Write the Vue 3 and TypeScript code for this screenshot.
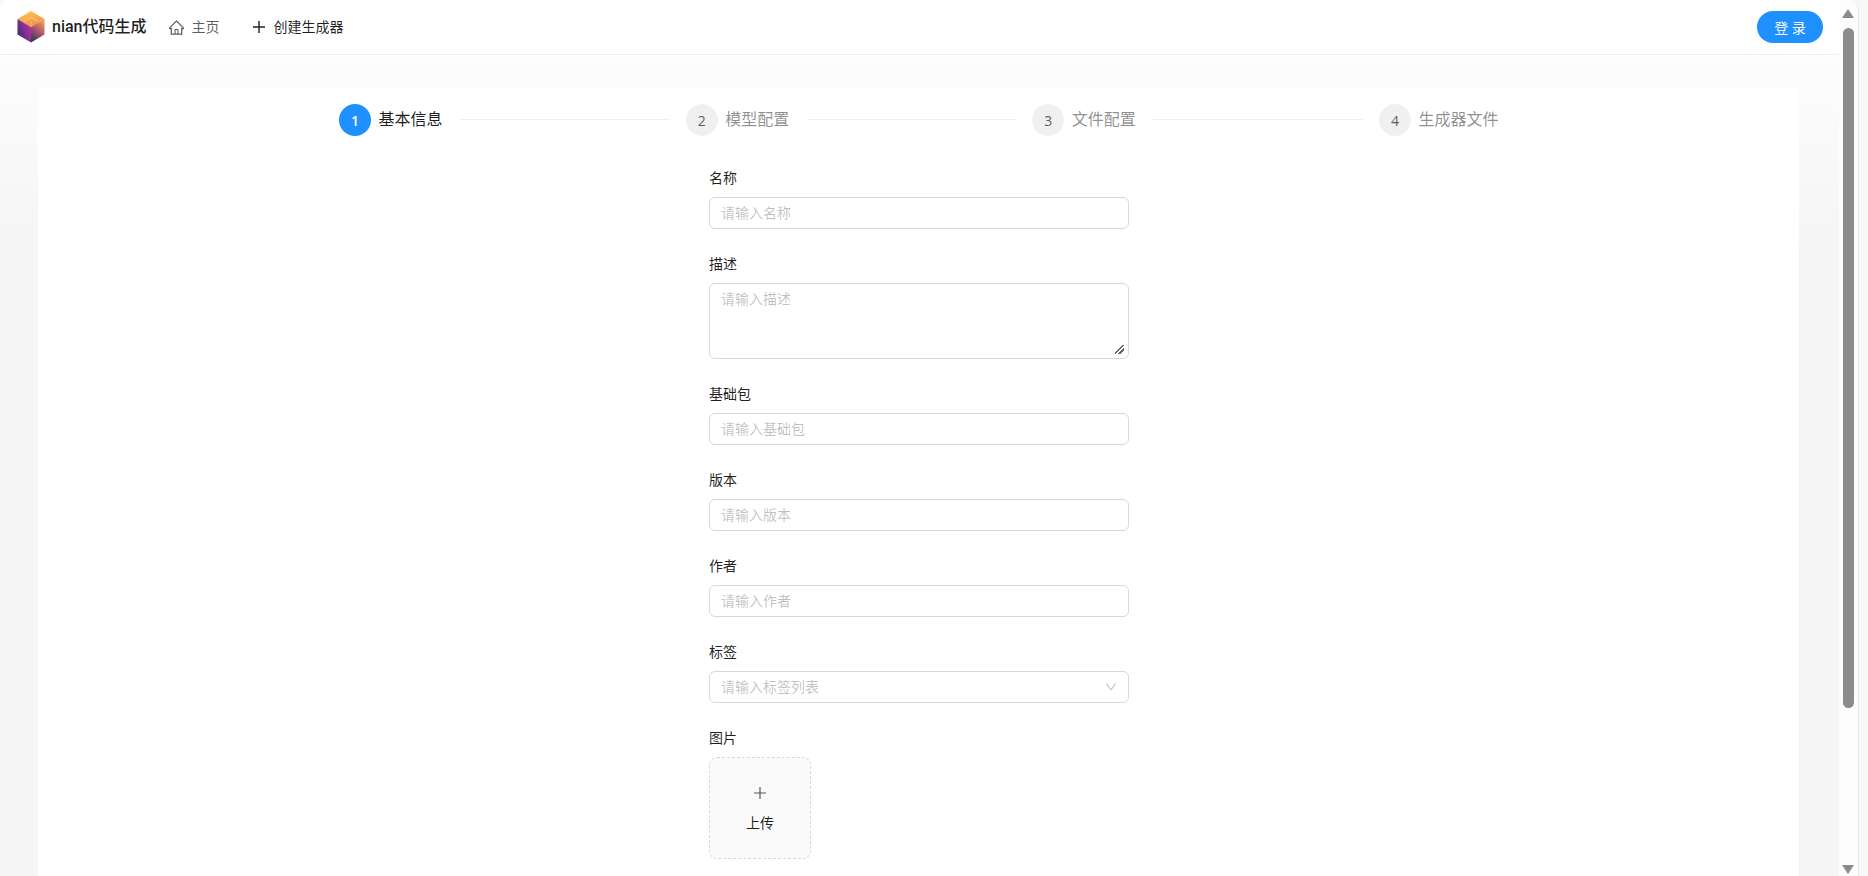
<script setup lang="ts">
const steps = [
  { n: 1, title: '基本信息', active: true },
  { n: 2, title: '模型配置', active: false },
  { n: 3, title: '文件配置', active: false },
  { n: 4, title: '生成器文件', active: false },
]
const fields = [
  { label: '基础包', ph: '请输入基础包' },
  { label: '版本', ph: '请输入版本' },
  { label: '作者', ph: '请输入作者' },
]
</script>

<template>
  <div class="shell">
    <div class="window">
      <div class="page">
        <header class="header">
          <div class="brand">
            <svg class="logo" viewBox="0 0 28 32" width="28" height="32">
              <defs>
                <linearGradient id="gTop" x1="0.3" y1="0" x2="0.7" y2="1">
                  <stop offset="0" stop-color="#ffc552" />
                  <stop offset="1" stop-color="#f08a4b" />
                </linearGradient>
                <linearGradient id="gLeft" x1="1" y1="0.1" x2="0" y2="0.8">
                  <stop offset="0" stop-color="#c8358e" />
                  <stop offset="0.55" stop-color="#7a3092" />
                  <stop offset="1" stop-color="#2f2c72" />
                </linearGradient>
                <linearGradient id="gRight" x1="0.7" y1="0" x2="0.2" y2="1">
                  <stop offset="0" stop-color="#f49a50" />
                  <stop offset="0.5" stop-color="#a9546f" />
                  <stop offset="1" stop-color="#2f3a5f" />
                </linearGradient>
              </defs>
              <polygon points="14,0 27.5,8 14,16 0.5,8" fill="url(#gTop)" />
              <polygon points="0.5,8 14,16 14,31.5 0.5,23.5" fill="url(#gLeft)" />
              <polygon points="27.5,8 14,16 14,31.5 27.5,23.5" fill="url(#gRight)" />
              <path d="M7 10.5 14 6.5 21 10.5 M14 15.5 V11" fill="none" stroke="#ffe0a8" stroke-width="0.7" opacity="0.8" />
            </svg>
            <span class="brand-name">nian代码生成</span>
          </div>
          <nav class="nav">
            <a class="nav-item muted">
              <svg viewBox="64 64 896 896" width="15" height="15" fill="currentColor">
                <path d="M946.5 505L560.1 118.8l-25.9-25.9a31.5 31.5 0 0 0-44.4 0L77.5 505a63.9 63.9 0 0 0-18.8 46c.4 35.2 29.7 63.3 64.9 63.3h42.5V940h691.8V614.3h43.4c17.1 0 33.2-6.7 45.3-18.8a63.6 63.6 0 0 0 18.7-45.3c0-17-6.7-33.1-18.8-45.2zM568 868H456V664h112v204zm217.9-325.7V868H632V640c0-22.1-17.9-40-40-40H432c-22.1 0-40 17.9-40 40v228H238.1V542.3h-96l370-369.7 23.1 23.1L882 542.3h-96.1z" />
              </svg>
              <span>主页</span>
            </a>
            <a class="nav-item strong">
              <svg viewBox="0 0 14 14" width="14" height="14" fill="none" stroke="currentColor" stroke-width="1.4">
                <path d="M7 1V13M1 7H13" />
              </svg>
              <span>创建生成器</span>
            </a>
          </nav>
          <button class="login" type="button">登 录</button>
        </header>

        <main class="card">
          <div class="steps">
            <div v-for="s in steps" :key="s.n" class="step" :class="{ active: s.active }">
              <span class="step-num">{{ s.n }}</span>
              <span class="step-title">{{ s.title }}</span>
              <span v-if="s.n < 4" class="step-line"></span>
            </div>
          </div>

          <form class="form">
            <div class="field">
              <label>名称</label>
              <input class="control" placeholder="请输入名称" />
            </div>
            <div class="field">
              <label>描述</label>
              <textarea class="control area" placeholder="请输入描述"></textarea>
            </div>
            <div v-for="f in fields" :key="f.label" class="field">
              <label>{{ f.label }}</label>
              <input class="control" :placeholder="f.ph" />
            </div>
            <div class="field">
              <label>标签</label>
              <div class="control select">
                <span class="select-ph">请输入标签列表</span>
                <svg viewBox="64 64 896 896" width="12" height="12" fill="#bfbfbf">
                  <path d="M884 256h-75c-5.1 0-9.9 2.5-12.9 6.6L512 654.2 227.9 262.6c-3-4.1-7.8-6.6-12.9-6.6h-75c-6.5 0-10.3 7.4-6.5 12.7l352.6 486.1c12.8 17.6 39 17.6 51.7 0l352.6-486.1c3.9-5.3.1-12.7-6.4-12.7z" />
                </svg>
              </div>
            </div>
            <div class="field">
              <label>图片</label>
              <div class="upload">
                <svg viewBox="0 0 14 14" width="14" height="14" fill="none" stroke="#595959" stroke-width="1.2">
                  <path d="M7 1V13M1 7H13" />
                </svg>
                <span>上传</span>
              </div>
            </div>
          </form>
        </main>
      </div>

      <div class="scrollbar">
        <span class="arrow up"></span>
        <span class="thumb"></span>
        <span class="arrow down"></span>
      </div>
    </div>
  </div>
</template>

<style>
html,
body {
  margin: 0;
  overflow: hidden;
}
</style>

<style scoped>
.shell {
  width: 1868px;
  height: 876px;
  display: flex;
  background: #f8f8f8;
  font-family: 'Open Sans', 'Noto Sans CJK SC', sans-serif;
  font-size: 14px;
  color: rgba(0, 0, 0, 0.88);
}
.window {
  width: 1858px;
  height: 876px;
  display: flex;
  overflow: hidden;
  border-right: 1px solid #e6e6e6;
  border-radius: 10px 10px 0 0;
  box-sizing: content-box;
  margin-right: -1px;
}
.page {
  width: 1839px;
  height: 876px;
  overflow: hidden;
  background: linear-gradient(#ffffff, #f5f5f5 28%);
}
.header {
  height: 54px;
  border-bottom: 1px solid #ededed;
  background: #fff;
  display: flex;
  align-items: center;
  padding: 0 16px 0 17px;
}
.brand {
  display: flex;
  align-items: center;
  gap: 7px;
}
.logo {
  display: block;
}
.brand-name {
  font-family: Roboto, 'Noto Sans CJK SC', sans-serif;
  font-size: 16px;
  font-weight: 500;
  line-height: 24px;
  color: rgba(0, 0, 0, 0.88);
}
.nav {
  display: flex;
  align-items: center;
  gap: 32px;
  margin-left: 22px;
  flex: 1;
}
.nav-item {
  display: flex;
  align-items: center;
  gap: 8px;
  line-height: 22px;
}
.muted {
  color: rgba(0, 0, 0, 0.65);
}
.strong {
  color: rgba(0, 0, 0, 0.88);
}
.login {
  width: 66px;
  height: 32px;
  border: 0;
  border-radius: 16px;
  background: #1e90ff;
  color: #fff;
  font: inherit;
  padding: 0;
}
.card {
  margin: 32px 40px 0 38px;
  padding: 17px 0 0 1px;
  height: 900px;
  background: #fff;
  border-radius: 6px;
}
.steps {
  width: 1160px;
  margin: 0 auto;
  display: flex;
  gap: 16px;
}
.step {
  flex: 1;
  display: flex;
  align-items: center;
  height: 32px;
  min-width: 0;
}
.step:last-child {
  flex: none;
  padding-right: 0.5px;
}
.step-num {
  width: 32px;
  height: 32px;
  border-radius: 50%;
  background: rgba(0, 0, 0, 0.06);
  color: rgba(0, 0, 0, 0.65);
  display: flex;
  align-items: center;
  justify-content: center;
  margin-right: 7.5px;
  flex: none;
}
.step-title {
  font-size: 16px;
  line-height: 32px;
  margin-bottom: 2px;
  color: rgba(0, 0, 0, 0.45);
  white-space: nowrap;
}
.step-line {
  flex: 1;
  height: 1px;
  background: rgba(5, 5, 5, 0.06);
  margin: 0 0 2px 17.5px;
}
.step.active .step-num {
  background: #1e90ff;
  color: #fff;
  font-weight: 600;
}
.step.active .step-title {
  color: rgba(0, 0, 0, 0.88);
}
.form {
  width: 420px;
  margin: 31px auto 0;
}
.field {
  margin-bottom: 24px;
}
.field label {
  display: block;
  height: 22px;
  line-height: 22px;
  margin-bottom: 8px;
}
.control {
  display: block;
  width: 100%;
  height: 32px;
  box-sizing: border-box;
  border: 1px solid #d9d9d9;
  border-radius: 6px;
  padding: 3px 11px 5px;
  font: inherit;
  line-height: 22px;
  background: #fff;
  color: rgba(0, 0, 0, 0.88);
  outline: none;
}
.control::placeholder,
.select-ph {
  color: rgba(0, 0, 0, 0.25);
}
.area {
  height: 76px;
  padding: 4px 11px;
  resize: vertical;
}
.area::-webkit-resizer {
  background: linear-gradient(
      135deg,
      transparent 0 40%,
      #666 40% 52%,
      transparent 52% 66%,
      #666 66% 78%,
      transparent 78%
    )
    left 2px top 2px / 9px 9px no-repeat;
}
.select {
  display: flex;
  align-items: center;
  justify-content: space-between;
  padding: 4px 11px;
}
.upload {
  width: 102px;
  height: 102px;
  box-sizing: border-box;
  border: 1px dashed #d9d9d9;
  border-radius: 8px;
  background: rgba(0, 0, 0, 0.02);
  display: flex;
  flex-direction: column;
  align-items: center;
  justify-content: center;
  gap: 12px;
  padding-top: 4px;
  line-height: 22px;
}
.scrollbar {
  width: 19px;
  height: 876px;
  background: #fdfdfd;
  position: relative;
  flex: none;
}
.thumb {
  position: absolute;
  left: 4px;
  top: 28px;
  width: 11px;
  height: 680px;
  border-radius: 6px;
  background: #8b8b8b;
}
.arrow {
  position: absolute;
  left: 3px;
  width: 0;
  height: 0;
  border-left: 6.5px solid transparent;
  border-right: 6.5px solid transparent;
}
.arrow.up {
  top: 9px;
  border-bottom: 9px solid #8b8b8b;
}
.arrow.down {
  bottom: 2px;
  border-top: 9px solid #8b8b8b;
}
</style>
